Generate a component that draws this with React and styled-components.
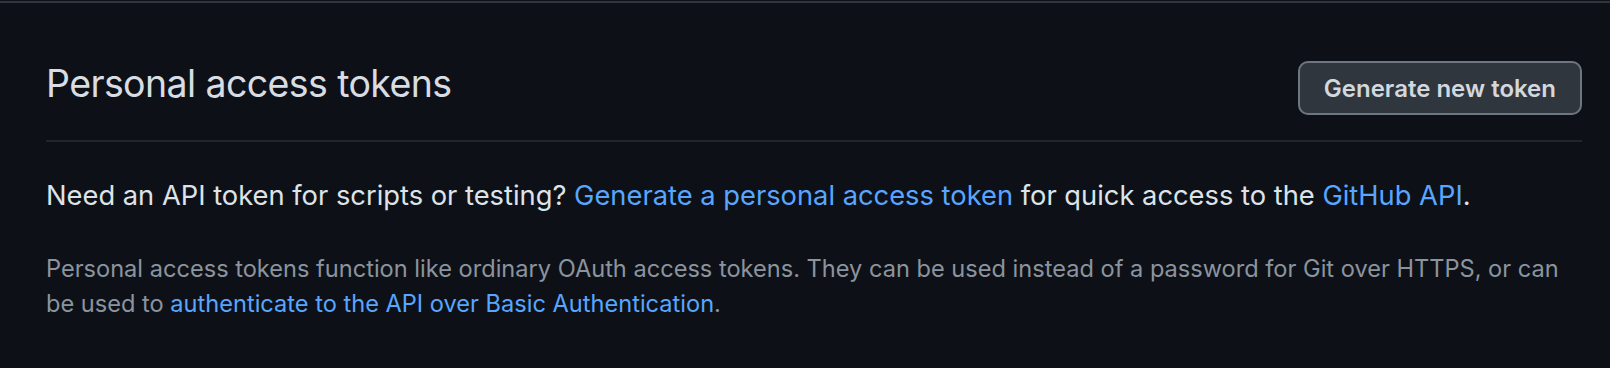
import React from "react";
import styled, { createGlobalStyle } from "styled-components";

const Global = createGlobalStyle`
  html, body {
    margin: 0;
    padding: 0;
    background: #0d1117;
  }
  body {
    font-family: Inter, "Liberation Sans", Arial, sans-serif;
    color: #e6edf3;
  }
`;

const Page = styled.div`
  padding-top: 1px;
  min-height: 368px;
  box-sizing: border-box;
  background: #0d1117;
`;

const TopRule = styled.div`
  height: 2px;
  background: #30363d;
`;

const Section = styled.section`
  padding: 0 28px 0 46px;
`;

const Header = styled.div`
  display: flex;
  align-items: center;
  justify-content: space-between;
  padding: 58px 0 24px;
  border-bottom: 2px solid #21262d;
`;

const Title = styled.h2`
  margin: 0 0 8px;
  font-size: 37.5px;
  font-weight: 400;
  letter-spacing: -0.6px;
  line-height: 1.25;
  color: #d7dde3;
`;

const Button = styled.button`
  height: 54px;
  padding: 0 24px;
  border-radius: 10px;
  border: 2px solid #6e7681;
  background: #30363d;
  color: #d2d8de;
  font-family: inherit;
  font-size: 24px;
  font-weight: 600;
  cursor: pointer;
`;

const Lead = styled.p`
  margin: 34px 0 0;
  font-size: 27.3px;
  line-height: 1.5;
  color: #dde3e9;
`;

const Note = styled.p`
  margin: 34px 0 0;
  font-size: 23.6px;
  line-height: 35px;
  color: #8b949e;
`;

const Link = styled.a`
  color: #58a6ff;
  text-decoration: none;
`;

export default function App() {
  return (
    <Page>
      <Global />
      <TopRule />
      <Section>
        <Header>
          <Title>Personal access tokens</Title>
          <Button>Generate new token</Button>
        </Header>
        <Lead>
          Need an API token for scripts or testing?{" "}
          <Link href="#">Generate a personal access token</Link> for quick
          access to the <Link href="#">GitHub API</Link>.
        </Lead>
        <Note>
          Personal access tokens function like ordinary OAuth access tokens.
          They can be used instead of a password for Git over HTTPS, or can be
          used to{" "}
          <Link href="#">authenticate to the API over Basic Authentication</Link>.
        </Note>
      </Section>
    </Page>
  );
}
